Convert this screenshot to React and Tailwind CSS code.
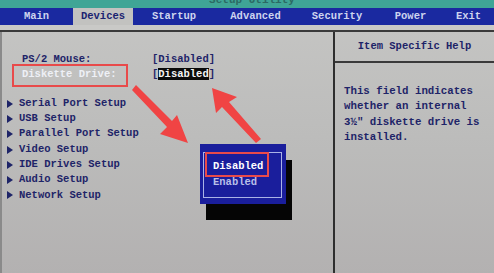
import React from "react";

const mono = { fontFamily: '"Liberation Mono", "DejaVu Sans Mono", monospace' };

const tabs = [
  { label: "Main", w: "w-[73px]" },
  { label: "Devices", w: "w-[60px]", active: true },
  { label: "Startup", w: "w-[82px]" },
  { label: "Advanced", w: "w-[81px]" },
  { label: "Security", w: "w-[82px]" },
  { label: "Power", w: "w-[65px]" },
  { label: "Exit", w: "w-[51px]" },
];

const submenus = [
  "Serial Port Setup",
  "USB Setup",
  "Parallel Port Setup",
  "Video Setup",
  "IDE Drives Setup",
  "Audio Setup",
  "Network Setup",
];

function Tri() {
  return (
    <svg width="6" height="8" viewBox="0 0 6 8" className="shrink-0">
      <path d="M0 0 L6 4 L0 8 Z" fill="#1e2468" />
    </svg>
  );
}

export default function App() {
  return (
    <div
      className="relative w-[494px] h-[273px] overflow-hidden flex flex-col bg-gradient-to-b from-[#c6c6c4] via-[#bcbcbb] to-[#b3b1b1]"
      style={mono}
    >
      {/* title strip, text mostly off the top of the photo */}
      <div className="h-[8px] bg-[#3fa596] flex justify-center overflow-hidden">
        <span className="text-[11px] font-bold text-[#2c6a64] leading-none -mt-[5px] pl-[10px]">
          Setup Utility
        </span>
      </div>

      {/* menu bar */}
      <div className="h-[17px] bg-[#1a29a0] flex text-[10.5px] font-bold leading-[17px]">
        {tabs.map((t) => (
          <div
            key={t.label}
            className={`${t.w} text-center ${
              t.active ? "bg-[#c2c2c0] text-[#1a2270]" : "text-[#cdd4ee]"
            }`}
          >
            {t.label}
          </div>
        ))}
      </div>

      {/* body */}
      <div className="h-[5px] bg-[#c9c9c7]" />
      <div className="flex-1 flex border-t-2 border-[#3a3a3a]">
        {/* left pane */}
        <div className="w-[333px] border-l-2 border-[#8a8a8a] pt-[20px] text-[10.5px] font-bold text-[#1e2468]">
          <div className="h-[15px] flex items-center">
            <span className="w-[150px] pl-[20px]">PS/2 Mouse:</span>
            <span>[Disabled]</span>
          </div>
          <div className="h-[15px] flex items-center">
            <span className="w-[150px] pl-[20px] text-[#eef0f6]">Diskette Drive:</span>
            <span>
              [<span className="bg-[#0a0a0a] text-[#f4f4f4]">Disabled</span>]
            </span>
          </div>
          <div className="mt-[14px] flex flex-col">
            {submenus.map((s) => (
              <div key={s} className="h-[15.3px] flex items-center gap-[6px] pl-[5px]">
                <Tri />
                <span>{s}</span>
              </div>
            ))}
          </div>
        </div>

        {/* right pane */}
        <div className="flex-1 border-l-2 border-[#2e2e2e] flex flex-col">
          <div className="h-[31px] border-b-2 border-[#3a3a3a] flex items-center justify-center text-[10.5px] font-bold text-[#1e2468]">
            Item Specific Help
          </div>
          <div className="pt-[21px] pl-[9px] text-[10.75px] font-bold text-[#1e2468] leading-[15.3px]">
            <div>This field indicates</div>
            <div>whether an internal</div>
            <div>3½" diskette drive is</div>
            <div>installed.</div>
          </div>
        </div>
      </div>

      {/* option popup */}
      <div className="absolute left-[200px] top-[144px] w-[86px] h-[60px] bg-[#1a1e9c] shadow-[6px_16px_0_0_#050505] text-[10.5px] font-bold">
        <div className="absolute left-[3px] top-[8px] right-[4px] bottom-[6px] border border-[#aab2e6]" />
        <div className="absolute left-[13px] top-[15px] text-white leading-[15px]">Disabled</div>
        <div className="absolute left-[13px] top-[31px] text-[#b8bfe8] leading-[15px]">Enabled</div>
      </div>

      {/* red annotations */}
      <div className="absolute left-[12px] top-[64px] w-[116px] h-[23px] border-2 border-[#e84a4a]" />
      <div className="absolute left-[205px] top-[152px] w-[64px] h-[25px] border-2 border-[#e84a4a]" />
      <svg className="absolute left-0 top-0" width="494" height="273" viewBox="0 0 494 273">
        <g fill="#f04444">
          <path d="M132 90 L136 85 L172 121 L177 115 L188 143 L160 134 L167 127 Z" />
          <path d="M261 139 L256 143 L222 107 L216 113 L212 88 L237 97 L229 102 Z" />
        </g>
      </svg>
    </div>
  );
}
